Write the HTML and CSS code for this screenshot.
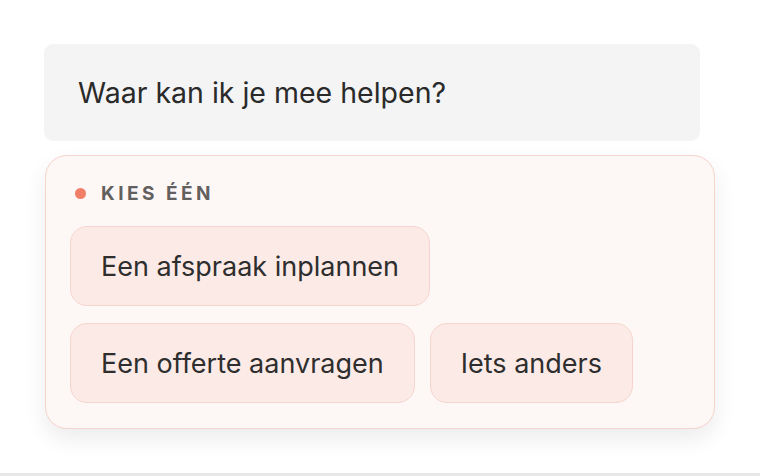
FILE: index.html
```html
<!DOCTYPE html>
<html lang="nl">
<head>
<meta charset="utf-8">
<link rel="stylesheet" href="styles.css">
</head>
<body>
<div class="page">
  <div class="bubble">Waar kan ik je mee helpen?</div>
  <div class="card">
    <div class="label"><span class="dot"></span><span class="label-text">KIES ÉÉN</span></div>
    <div class="options">
      <div class="row">
        <button class="opt">Een afspraak inplannen</button>
      </div>
      <div class="row">
        <button class="opt">Een offerte aanvragen</button>
        <button class="opt">Iets anders</button>
      </div>
    </div>
  </div>
</div>
<div class="strip"></div>
</body>
</html>
```

FILE: styles.css
```css
html, body {
  margin: 0;
  padding: 0;
  background: #ffffff;
  font-family: Inter, "Noto Sans", sans-serif;
  color: #2b2b2b;
}
.page {
  padding: 44px 0 44px 44px;
  height: 385px;
}
.bubble {
  width: 656px;
  height: 97px;
  box-sizing: border-box;
  background: #f4f4f4;
  border-radius: 9px;
  padding-left: 34px;
  display: flex;
  align-items: center;
  font-size: 28.5px;
  color: #2a2a2a;
}
.card {
  margin-top: 14px;
  margin-left: 1px;
  width: 670px;
  height: 274px;
  box-sizing: border-box;
  background: #fdf8f6;
  border: 1.5px solid #f6d3cc;
  border-radius: 22px;
  box-shadow: 0 10px 22px rgba(0, 0, 0, 0.08);
  padding: 26px 24px 24px 24px;
}
.label {
  display: flex;
  align-items: center;
  gap: 15px;
  padding-left: 5px;
  height: 22px;
}
.dot {
  width: 11px;
  height: 11px;
  border-radius: 50%;
  background: #f17e66;
}
.label-text {
  font-size: 19px;
  font-weight: 700;
  letter-spacing: 3.5px;
  color: #62605e;
}
.options {
  margin-top: 22px;
  display: flex;
  flex-direction: column;
  gap: 17px;
}
.row {
  display: flex;
  gap: 15px;
}
.opt {
  font-family: inherit;
  font-size: 27px;
  color: #2e2e2e;
  background: #fceae7;
  border: 1.5px solid #f7d5ce;
  border-radius: 17px;
  height: 80px;
  padding: 0 30px;
  cursor: pointer;
}
.strip {
  height: 3px;
  background: #e8e8e8;
}
```
